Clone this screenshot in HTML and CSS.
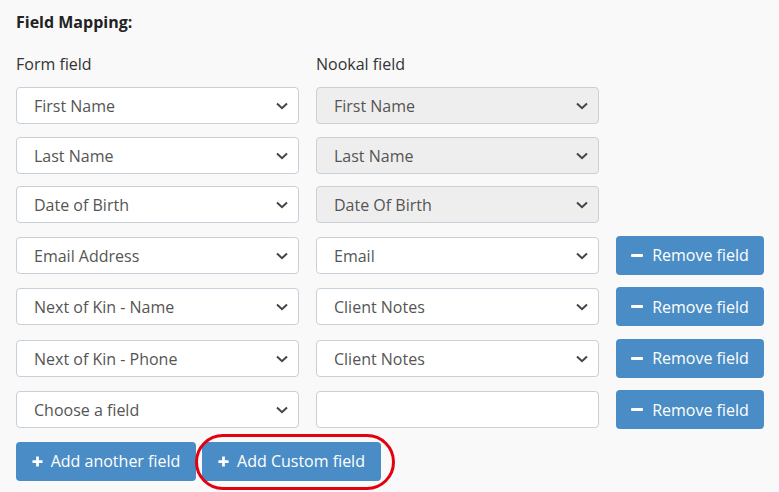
FILE: index.html
```html
<!DOCTYPE html>
<html>
<head>
<meta charset="utf-8">
<link rel="stylesheet" href="styles.css">
</head>
<body>
<div class="page">
  <div class="heading">Field Mapping:</div>
  <div class="labels">
    <div class="label">Form field</div>
    <div class="label">Nookal field</div>
  </div>
  <div class="rows">
    <div class="row">
      <div class="select">First Name<svg class="chev" viewBox="0 0 12 8"><path d="M1 1.5 6 6.2 11 1.5"/></svg></div>
      <div class="select disabled">First Name<svg class="chev" viewBox="0 0 12 8"><path d="M1 1.5 6 6.2 11 1.5"/></svg></div>
    </div>
    <div class="row">
      <div class="select">Last Name<svg class="chev" viewBox="0 0 12 8"><path d="M1 1.5 6 6.2 11 1.5"/></svg></div>
      <div class="select disabled">Last Name<svg class="chev" viewBox="0 0 12 8"><path d="M1 1.5 6 6.2 11 1.5"/></svg></div>
    </div>
    <div class="row">
      <div class="select">Date of Birth<svg class="chev" viewBox="0 0 12 8"><path d="M1 1.5 6 6.2 11 1.5"/></svg></div>
      <div class="select disabled">Date Of Birth<svg class="chev" viewBox="0 0 12 8"><path d="M1 1.5 6 6.2 11 1.5"/></svg></div>
    </div>
    <div class="row">
      <div class="select">Email Address<svg class="chev" viewBox="0 0 12 8"><path d="M1 1.5 6 6.2 11 1.5"/></svg></div>
      <div class="select">Email<svg class="chev" viewBox="0 0 12 8"><path d="M1 1.5 6 6.2 11 1.5"/></svg></div>
      <div class="btn"><span class="minus"></span>Remove field</div>
    </div>
    <div class="row">
      <div class="select">Next of Kin - Name<svg class="chev" viewBox="0 0 12 8"><path d="M1 1.5 6 6.2 11 1.5"/></svg></div>
      <div class="select">Client Notes<svg class="chev" viewBox="0 0 12 8"><path d="M1 1.5 6 6.2 11 1.5"/></svg></div>
      <div class="btn"><span class="minus"></span>Remove field</div>
    </div>
    <div class="row">
      <div class="select">Next of Kin - Phone<svg class="chev" viewBox="0 0 12 8"><path d="M1 1.5 6 6.2 11 1.5"/></svg></div>
      <div class="select">Client Notes<svg class="chev" viewBox="0 0 12 8"><path d="M1 1.5 6 6.2 11 1.5"/></svg></div>
      <div class="btn"><span class="minus"></span>Remove field</div>
    </div>
    <div class="row">
      <div class="select">Choose a field<svg class="chev" viewBox="0 0 12 8"><path d="M1 1.5 6 6.2 11 1.5"/></svg></div>
      <div class="select input"></div>
      <div class="btn"><span class="minus"></span>Remove field</div>
    </div>
    <div class="actions">
      <div class="btn add"><svg class="plus" viewBox="0 0 12 12"><path d="M6 0.5v11M0.5 6h11"/></svg>Add another field</div>
      <div class="btn add custom"><svg class="plus" viewBox="0 0 12 12"><path d="M6 0.5v11M0.5 6h11"/></svg>Add Custom field<span class="ring"></span></div>
    </div>
  </div>
</div>
</body>
</html>
```

FILE: styles.css
```css
html, body {
  margin: 0;
  padding: 0;
  background: #f9f9f9;
}
body {
  font-family: "Open Sans", "Liberation Sans", sans-serif;
  color: #333;
  width: 779px;
  height: 492px;
  overflow: hidden;
}
.page {
  padding: 11px 0 0 16px;
}
.heading {
  font-weight: 700;
  font-size: 16px;
  line-height: 22px;
  color: #222;
}
.labels {
  display: grid;
  grid-template-columns: 283px 283px;
  column-gap: 17px;
  margin-top: 20px;
}
.label {
  font-size: 16px;
  line-height: 22px;
  color: #333;
}
.rows {
  margin-top: 12px;
  display: flex;
  flex-direction: column;
  gap: 12.5px;
}
.row {
  display: grid;
  grid-template-columns: 283px 283px 148px;
  column-gap: 17px;
  align-items: center;
}
.select {
  box-sizing: border-box;
  height: 37px;
  border: 1px solid #c8d0da;
  border-radius: 4px;
  background: #fff;
  padding: 1px 10px 0 17px;
  font-size: 16px;
  line-height: 34px;
  color: #555;
  display: flex;
  align-items: center;
  justify-content: space-between;
}
.select.disabled {
  background: #eeeeee;
}
.chev {
  width: 12px;
  height: 8px;
  fill: none;
  stroke: #444;
  stroke-width: 2;
  stroke-linecap: butt;
}
.btn {
  box-sizing: border-box;
  height: 39px;
  border-radius: 4px;
  background: #4a8dc6;
  color: #fff;
  font-size: 16px;
  display: flex;
  align-items: center;
  justify-content: center;
  gap: 9px;
}
.minus {
  width: 12px;
  height: 3px;
  background: #fff;
  border-radius: 1px;
}
.actions {
  display: flex;
  gap: 6px;
}
.btn.add {
  width: 180px;
  gap: 8px;
  position: relative;
}
.btn.add.custom {
  width: 179px;
}
.plus {
  width: 11px;
  height: 11px;
  fill: none;
  stroke: #fff;
  stroke-width: 3;
}
.ring {
  position: absolute;
  left: -7px;
  right: -14px;
  top: -8px;
  bottom: -9px;
  border: 3px solid #e3000f;
  border-radius: 28px;
}
```
